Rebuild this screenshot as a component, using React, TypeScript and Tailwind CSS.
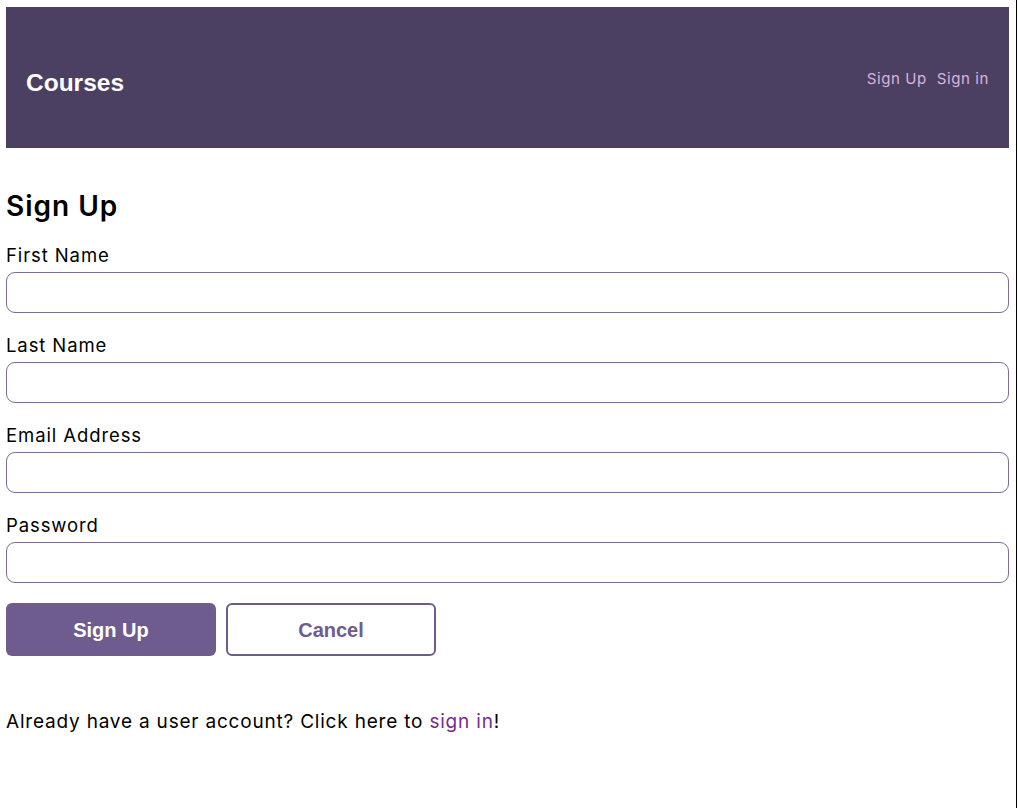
import React from 'react';

const fields = ['First Name', 'Last Name', 'Email Address', 'Password'];

const App: React.FC = () => {
  return (
    <div className="min-h-[808px] w-[1017px] border-r border-black bg-white font-['Inter',sans-serif] text-black">
      <div className="pl-[6px] pr-[7px] pt-[7px]">
        <header className="flex h-[141px] items-center justify-between bg-[#4c4062] px-5">
          <h1 className="pt-[11px] font-['Liberation_Sans',sans-serif] text-[24.5px] font-bold text-white">Courses</h1>
          <nav className="flex gap-[10px] pt-[3px] text-[15px] tracking-[0.6px] text-[#dcb2dc]">
            <a href="#">Sign Up</a>
            <a href="#">Sign in</a>
          </nav>
        </header>

        <main className="pt-[38px]">
          <h2 className="text-[28px] font-semibold leading-[40px] tracking-[1px]">Sign Up</h2>
          <form className="mt-[17px]">
            {fields.map(f => (
              <div key={f} className="mb-[20px]">
                <label className="mb-[5px] block text-[18.5px] leading-[24px] tracking-[0.9px]">{f}</label>
                <input
                  type={f === 'Password' ? 'password' : 'text'}
                  className="block h-[41px] w-full rounded-[9px] border border-[#7b6b98] px-3"
                />
              </div>
            ))}
            <div className="flex gap-[10px]">
              <button
                type="button"
                className="h-[53px] w-[210px] rounded-[6px] bg-[#6f5c8f] font-['Liberation_Sans',sans-serif] text-[20px] font-bold text-white"
              >
                Sign Up
              </button>
              <button
                type="button"
                className="h-[53px] w-[210px] rounded-[6px] border-2 border-[#6f5c8f] bg-white font-['Liberation_Sans',sans-serif] text-[20px] font-bold text-[#6f5c8f]"
              >
                Cancel
              </button>
            </div>
          </form>
          <p className="mt-[52px] text-[19px] tracking-[0.8px]">
            Already have a user account? Click here to <a href="#" className="text-[#7a2c8c]">sign in</a>!
          </p>
        </main>
      </div>
    </div>
  );
};

export default App;
